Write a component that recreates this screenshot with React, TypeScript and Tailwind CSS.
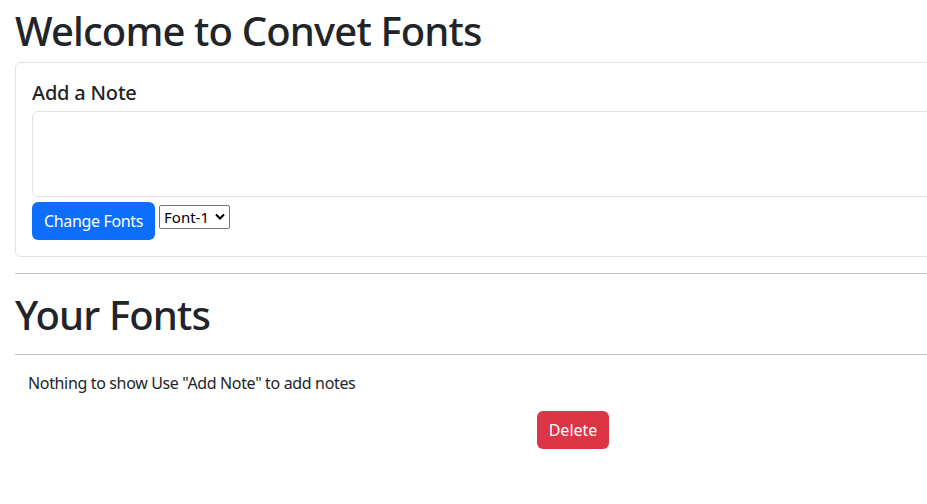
import React, { useState } from 'react';

const FONT_OPTIONS = ['Font-1', 'Font-2', 'Font-3'];

export default function App() {
  const [note, setNote] = useState('');
  const [font, setFont] = useState(FONT_OPTIONS[0]);

  return (
    <div className="w-full overflow-hidden bg-white text-[#212529] font-['Noto_Sans',sans-serif]">
      <div className="w-[1146px] px-[15px] pt-[6px] pb-10">
        {/* Add note */}
        <h1 className="mb-2 pt-[2px] text-[40px] leading-[46px] font-medium tracking-[-0.85px]">Welcome to Convet Fonts</h1>
        <div className="rounded-md border border-[#dee2e6] p-4">
          <h5 className="mb-2 pt-[3px] text-[20px] leading-[21px] font-medium tracking-[-0.2px]">Add a Note</h5>
          <textarea
            value={note}
            onChange={(e) => setNote(e.target.value)}
            className="block h-[86px] w-full resize-none rounded-md border border-[#dee2e6] px-3 py-1.5 outline-none"
          />
          <div className="mt-[5px] flex items-start gap-1">
            <button className="h-[38px] rounded-md bg-[#0d6efd] px-3 text-base tracking-[-0.35px] text-white">Change Fonts</button>
            <div className="relative mt-[3px]">
              <select
                value={font}
                onChange={(e) => setFont(e.target.value)}
                className="h-6 w-[71px] appearance-none rounded-[2px] border border-[#767676] bg-white pl-1 text-[15px] text-black outline-none"
              >
                {FONT_OPTIONS.map((f) => (
                  <option key={f} value={f}>{f}</option>
                ))}
              </select>
              <svg className="pointer-events-none absolute right-[5px] top-[8px]" width="10" height="7" viewBox="0 0 10 7">
                <path d="M1 1.5 L5 5.5 L9 1.5" fill="none" stroke="#000" strokeWidth="2" />
              </svg>
            </div>
          </div>
        </div>

        <hr className="my-4 border-t border-[#c4c4c4]" />

        {/* Saved notes */}
        <h1 className="mb-2 pt-[2px] text-[40px] leading-[46px] font-medium tracking-[-0.85px]">Your Fonts</h1>
        <hr className="mt-4 mb-4 border-t border-[#c4c4c4]" />
        <p className="mb-4 pl-[13px] text-base leading-6 tracking-[-0.35px]">Nothing to show Use "Add Note" to add notes</p>
        <div className="flex justify-center">
          <button className="h-[38px] rounded-md bg-[#dc3545] px-3 text-base text-white">Delete</button>
        </div>
      </div>
    </div>
  );
}
